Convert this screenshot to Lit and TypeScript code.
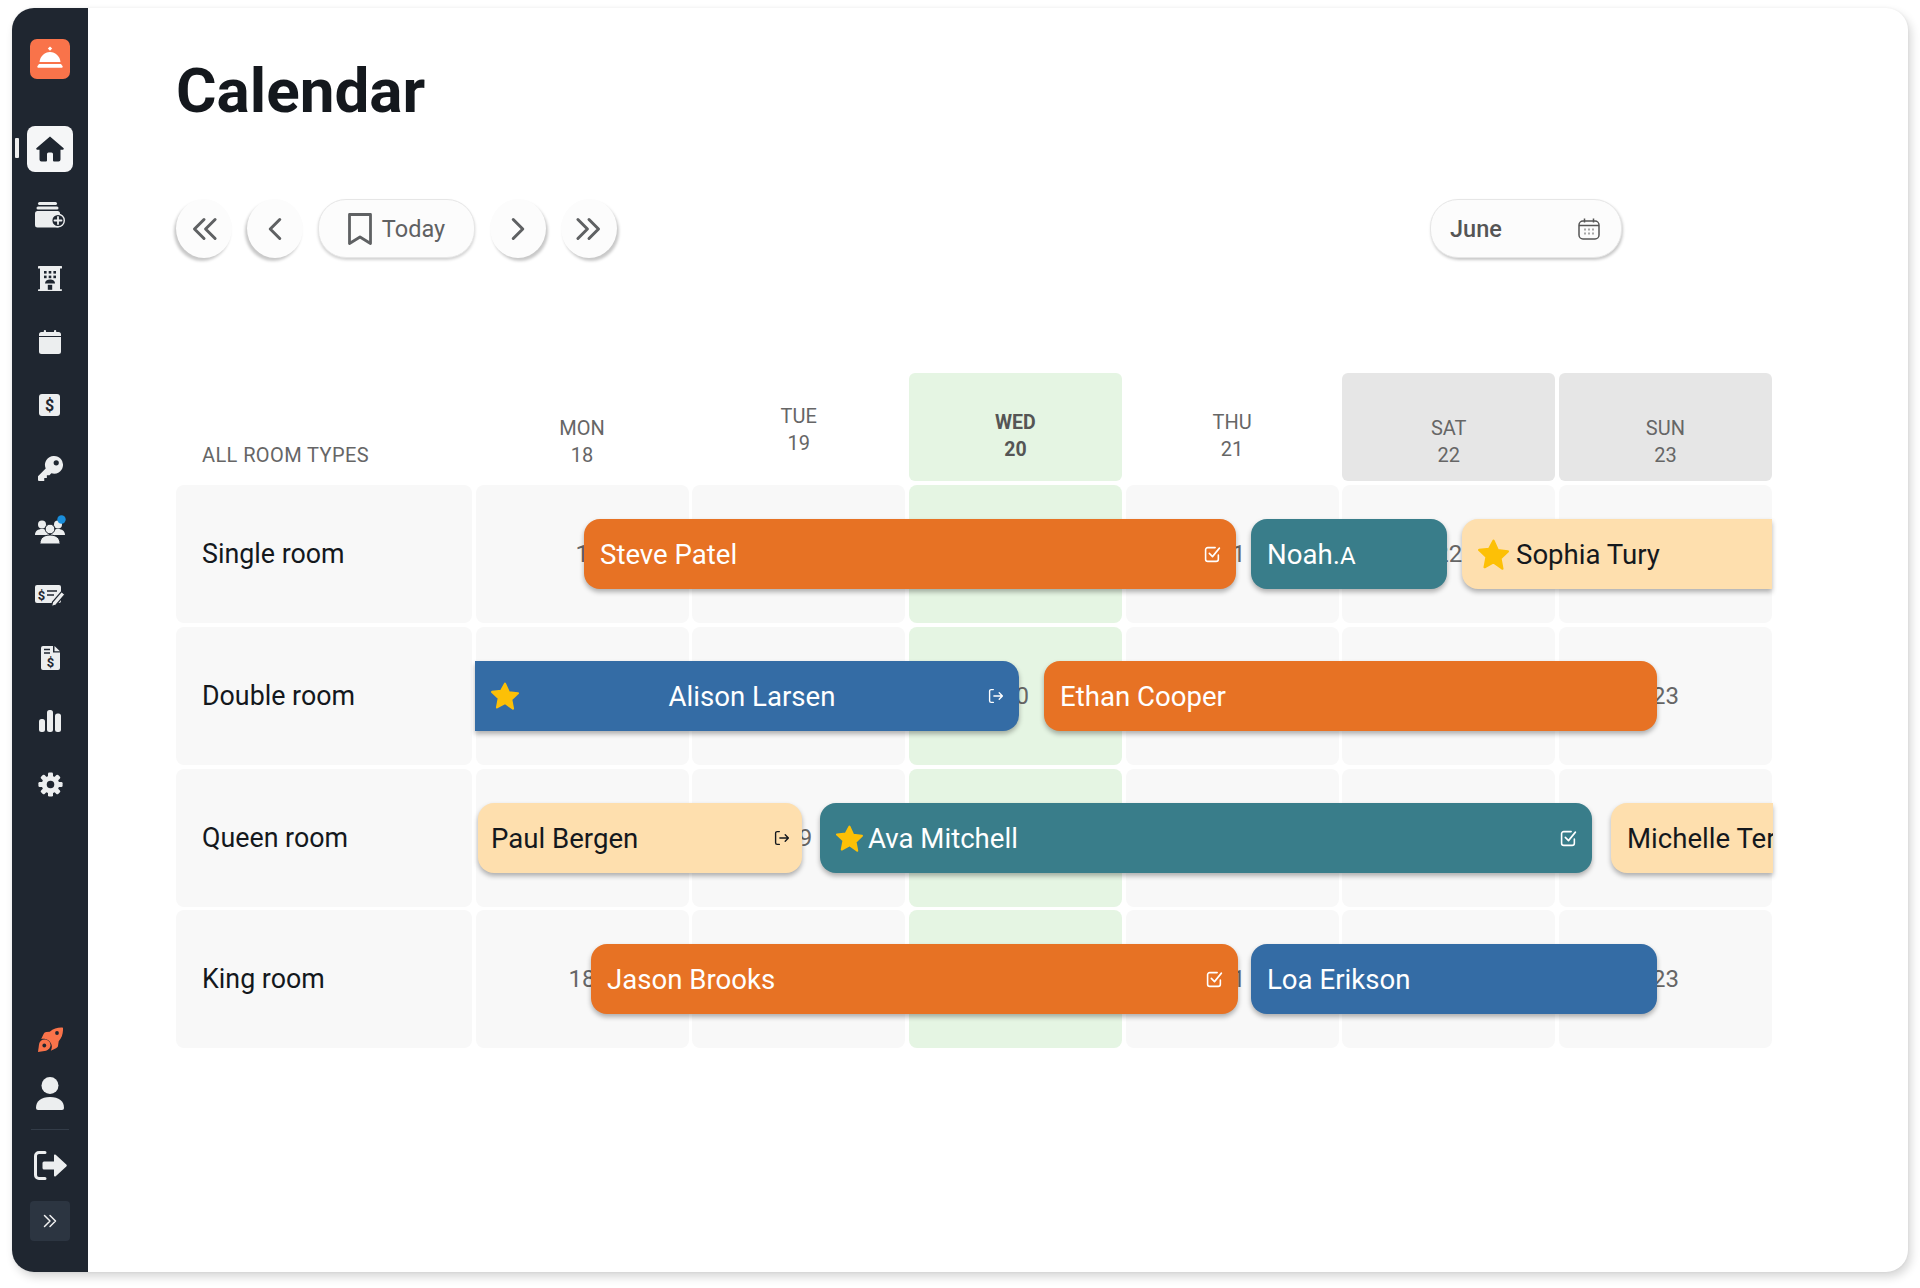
import { LitElement, html, css, svg } from "lit";
import { customElement } from "lit/decorators.js";

const INK = "#1f2630";
const LIGHT = "#eceeef";

const gear = svg`<svg viewBox="0 0 24 24" width="25" height="25">
  ${[0, 45, 90, 135, 180, 225, 270, 315].map(
    (a) => svg`<rect x="9.6" y="0.4" width="4.8" height="6" rx="1.2" fill="${LIGHT}" transform="rotate(${a} 12 12)"/>`
  )}
  <circle cx="12" cy="12" r="8.4" fill="${LIGHT}"/><circle cx="12" cy="12" r="3.6" fill="${INK}"/></svg>`;

const icons = [
  svg`<svg viewBox="0 0 30 26" width="30" height="26">
    <rect x="3" y="0" width="19" height="3" rx="1.5" fill="${LIGHT}"/>
    <rect x="1.5" y="4.5" width="22" height="3" rx="1.5" fill="${LIGHT}"/>
    <rect x="0" y="9" width="25" height="16.5" rx="2.5" fill="${LIGHT}"/>
    <circle cx="23" cy="18.5" r="6.3" fill="${INK}" stroke="${LIGHT}" stroke-width="1.4"/>
    <path d="M23 15v7M19.5 18.5h7" stroke="${LIGHT}" stroke-width="1.8" stroke-linecap="round"/></svg>`,
  svg`<svg viewBox="0 0 24 25" width="24" height="25">
    <path d="M0 .8a.8.8 0 0 1 .8-.8h22.4a.8.8 0 0 1 0 2.4H.8A.8.8 0 0 1 0 .8z M0 24a.8.8 0 0 1 .8-.8h22.4a.8.8 0 0 1 0 1.8H.8A.8.8 0 0 1 0 24z M2 2h20v22H2z" fill="${LIGHT}"/>
    <g fill="${INK}"><rect x="6" y="5" width="2.6" height="2.6"/><rect x="10.7" y="5" width="2.6" height="2.6"/><rect x="15.4" y="5" width="2.6" height="2.6"/><rect x="6" y="9.6" width="2.6" height="2.6"/><rect x="10.7" y="9.6" width="2.6" height="2.6"/><rect x="15.4" y="9.6" width="2.6" height="2.6"/>
    <path d="M7 17.6c0-2.8 2.2-4 5-4s5 1.200 5 4z"/><rect x="9.800" y="18.800" width="4.400" height="5"/></g></svg>`,
  svg`<svg viewBox="0 0 22 24" width="22" height="24">
    <path d="M2.500 2h17A2.500 2.500 0 0 1 22 4.500V6H0V4.500A2.500 2.500 0 0 1 2.500 2zM0 7h22v14.500a2.500 2.500 0 0 1-2.500 2.500h-17A2.500 2.500 0 0 1 0 21.500z" fill="${LIGHT}"/>
    <rect x="4.800" y="0" width="2.200" height="4" rx="1" fill="${LIGHT}"/><rect x="15" y="0" width="2.200" height="4" rx="1" fill="${LIGHT}"/></svg>`,
  svg`<svg viewBox="0 0 22 22" width="22" height="22"><rect width="21" height="22" rx="3" fill="${LIGHT}"/>
    <text x="10.500" y="17" text-anchor="middle" font-family="Roboto" font-weight="700" font-size="16" fill="${INK}">$</text></svg>`,
  svg`<svg viewBox="0 0 24 24" width="25" height="25">
    <path fill-rule="evenodd" d="M15.500 0a8.500 8.500 0 1 1-2.700 16.560L11 18.500H8.500V21H6v3H1a1 1 0 0 1-1-1v-3.600L7.400 12A8.500 8.500 0 0 1 15.500 0zm2 4a2.500 2.500 0 1 0 0 5 2.500 2.500 0 0 0 0-5z" fill="${LIGHT}"/></svg>`,
  svg`<svg viewBox="0 0 30 26" width="30" height="26" overflow="visible">
    <circle cx="7" cy="6.500" r="4" fill="${LIGHT}"/><circle cx="23" cy="6.500" r="4" fill="${LIGHT}"/>
    <path d="M0 17c0-4 3-6 7-6s7 2 7 6zM16 17c0-4 3-6 7-6s7 2 7 6z" fill="${LIGHT}"/>
    <circle cx="15" cy="11" r="4.800" fill="${LIGHT}" stroke="${INK}" stroke-width="1"/>
    <path d="M5 25.500c0-5.500 4-8.500 10-8.500s10 3 10 8.500a.5.5 0 0 1-.5.5h-19a.5.5 0 0 1-.5-.5z" fill="${LIGHT}" stroke="${INK}" stroke-width="1"/>
    <circle cx="26.500" cy="1.500" r="4.200" fill="#1a8edb"/></svg>`,
  svg`<svg viewBox="0 0 30 22" width="30" height="22" style="display:block">
    <rect width="26" height="18" rx="2" fill="${LIGHT}"/>
    <text x="6.500" y="14.500" text-anchor="middle" font-family="Roboto" font-weight="700" font-size="13" fill="${INK}">$</text>
    <path d="M12 6h10M12 10h7" stroke="${INK}" stroke-width="1.500"/>
    <path d="M16.500 21.500l1-4.500L26.500 6.500l3.500 3L21 20z" fill="${LIGHT}" stroke="${INK}" stroke-width="1.200"/></svg>`,
  svg`<svg viewBox="0 0 19 24" width="19" height="24">
    <path d="M2 0h10v6.500h7V22a2 2 0 0 1-2 2H2a2 2 0 0 1-2-2V2a2 2 0 0 1 2-2zM13.500 0L19 5.200h-5.500z" fill="${LIGHT}"/>
    <path d="M3 3.500h6M3 7h6" stroke="${INK}" stroke-width="1.300"/>
    <text x="9.500" y="21" text-anchor="middle" font-family="Roboto" font-weight="700" font-size="13" fill="${INK}">$</text></svg>`,
  svg`<svg viewBox="0 0 22 22" width="22" height="22" fill="${LIGHT}">
    <rect x="0" y="9" width="6" height="13" rx="2.500"/><rect x="8" y="0" width="6" height="22" rx="2.500"/><rect x="16" y="3.500" width="6" height="18.500" rx="2.500"/></svg>`,
  gear,
];

const rocket = svg`<svg viewBox="0 0 25 25" width="25" height="25" fill="#f9734a">
  <path d="M24.400.6c.4 0 .6.300.6.600.2 4.800-1 9.500-4.300 13L20 19c-.2 1-1 1.800-2 2.300l-5.200 2.400c.8-1.500 1.200-3 1-4.700-.5-3.800-3.600-6.700-7.600-7.200-1-.1-2 0-3 .3l2.400-5C6.200 5.700 7.200 5 8.300 4.900l3.500-.2C15.300 1.800 20 .3 24.400.6z"/>
  <circle cx="19" cy="6" r="1.900" fill="${INK}"/>
  <path d="M6.500 12.500c3.600 0 6 2.700 6 5.800 0 2.600-1.800 4.500-4.400 5.400L0 25l1.100-8c.4-2.700 2.600-4.500 5.400-4.500z"/><circle cx="6.300" cy="18.500" r="1.900" fill="${INK}"/></svg>`;
const user = svg`<svg viewBox="0 0 28 33" width="28" height="33" fill="${LIGHT}"><circle cx="14" cy="8.500" r="8.500"/>
  <path d="M0 31c0-7 5-11 14-11s14 4 14 11a2 2 0 0 1-2 2H2a2 2 0 0 1-2-2z"/></svg>`;
const logout = svg`<svg viewBox="0 0 33 29" width="33" height="29">
  <path d="M11 1.500H5a3.500 3.500 0 0 0-3.500 3.500v19A3.500 3.500 0 0 0 5 27.500h6" fill="none" stroke="${LIGHT}" stroke-width="3" stroke-linecap="round"/>
  <path d="M10 10.500h10V4.500a1 1 0 0 1 1.700-.7l10.600 9.700a1.400 1.400 0 0 1 0 2L21.700 25.200a1 1 0 0 1-1.700-.7v-6H10a1.500 1.500 0 0 1-1.500-1.500v-5A1.500 1.500 0 0 1 10 10.500z" fill="${LIGHT}"/></svg>`;
const bell = svg`<svg viewBox="0 0 40 40" width="40" height="40" fill="#fff">
  <path d="M20 7.500l2.200 2-2.200 2.200L17.800 9.500z"/>
  <path d="M9.500 23c.5-5.500 5-10 10.500-10s10 4.500 10.500 10z"/>
  <path d="M9 25h22l1.600 2.200c.3.800-.2 1.600-1 1.600H8.400c-.8 0-1.300-.8-1-1.600z"/></svg>`;
const home = svg`<svg viewBox="0 0 28 26" width="28" height="26">
  <path d="M14 .5L27.400 12a1 1 0 0 1-.6 1.800H24.500V23.500a2 2 0 0 1-2 2H18a1 1 0 0 1-1-1V18a1.500 1.500 0 0 0-1.500-1.500h-3A1.500 1.500 0 0 0 11 18v6.500a1 1 0 0 1-1 1H5.500a2 2 0 0 1-2-2V13.800H1.200a1 1 0 0 1-.6-1.800z" fill="${INK}"/></svg>`;

const chev = (d: string, w = 1.9, size = 38) =>
  svg`<svg viewBox="0 0 24 24" width="${size}" height="${size}" fill="none" stroke="currentColor" stroke-width="${w}" stroke-linecap="round" stroke-linejoin="round"><path d="${d}"/></svg>`;

const star = (s: number) =>
  svg`<svg viewBox="1.500 1.500 21 20.500" width="${s}" height="${s}"><path d="M12 2.500l2.900 6.400 6.800.8-5 4.700 1.300 6.900L12 17l-6 3.300 1.300-6.900-5-4.700 6.800-.8z" fill="#fdc006" stroke="#fdc006" stroke-width="1.600" stroke-linejoin="round"/></svg>`;
const checkIco = svg`<svg viewBox="0 0 16 16" width="17" height="17" fill="none" stroke="currentColor" stroke-width="1.500" stroke-linecap="round" stroke-linejoin="round"><path d="M13.500 8.500v4a2 2 0 0 1-2 2h-8a2 2 0 0 1-2-2v-9a2 2 0 0 1 2-2h7"/><path d="M5 7l3 3 6.500-8"/></svg>`;
const exitIco = svg`<svg viewBox="0 0 15 15" width="16" height="16" fill="none" stroke="currentColor" stroke-width="1.300" stroke-linecap="round" stroke-linejoin="round"><path d="M5 1.500H3a1.500 1.500 0 0 0-1.500 1.500v9A1.500 1.500 0 0 0 3 13.500h2"/><path d="M5.500 7.500h8M10.500 4.500l3 3-3 3"/></svg>`;

interface Bar {
  name: string; small?: string; x: number; w: number; c: string; star?: number; gap?: number; end?: "check" | "exit";
  flatL?: boolean; flatR?: boolean; center?: boolean; pad?: string;
}
const rooms: { name: string; bars: Bar[]; monShift?: number }[] = [
  { name: "Single room", monShift: 14, bars: [
    { name: "Steve Patel", x: 584, w: 652, c: "orange", end: "check" },
    { name: "Noah.", small: "A", x: 1251, w: 196, c: "teal" },
    { name: "Sophia Tury", x: 1462, w: 310, c: "cream", star: 31, gap: 7, flatR: true },
  ] },
  { name: "Double room", bars: [
    { name: "Alison Larsen", x: 475, w: 544, c: "blue", star: 28, gap: 7, end: "exit", flatL: true, center: true },
    { name: "Ethan Cooper", x: 1044, w: 613, c: "orange" },
  ] },
  { name: "Queen room", bars: [
    { name: "Paul Bergen", x: 478, w: 324, c: "cream", end: "exit", pad: "0 12px 0 13px" },
    { name: "Ava Mitchell", x: 820, w: 772, c: "teal", star: 27, gap: 5, end: "check" },
    { name: "Michelle Terry", x: 1611, w: 162, c: "cream", flatR: true },
  ] },
  { name: "King room", bars: [
    { name: "Jason Brooks", x: 591, w: 647, c: "orange", end: "check" },
    { name: "Loa Erikson", x: 1251, w: 406, c: "blue" },
  ] },
];
const days = [
  { d: "MON", n: "18", pb: 12.5, k: "" },
  { d: "TUE", n: "19", pb: 24, k: "" },
  { d: "WED", n: "20", pb: 18, k: "cur" },
  { d: "THU", n: "21", pb: 18, k: "" },
  { d: "SAT", n: "22", pb: 12.5, k: "weekend" },
  { d: "SUN", n: "23", pb: 12.5, k: "weekend" },
];

@customElement("app-root")
export class AppRoot extends LitElement {
  static styles = css`
    :host { display: block; height: 1288px; box-sizing: border-box; padding: 8px 12px 16px; background: #fff; font-family: Roboto, sans-serif; overflow: hidden; }
    .frame { display: flex; height: 100%; border-radius: 22px; background: #fff; box-shadow: 3px 5px 10px rgba(0,0,0,.16), 0 0 3px rgba(0,0,0,.06); overflow: hidden; }
    .side { width: 76px; flex: none; background: #1f2630; display: flex; flex-direction: column; align-items: center; padding: 31px 0; box-sizing: border-box; position: relative; }
    .logo { width: 40px; height: 40px; border-radius: 7px; background: #f9734a; flex: none; margin-bottom: 38px; }
    .item { height: 63.2px; width: 100%; display: flex; align-items: center; justify-content: center; flex: none; }
    .item.first { margin-bottom: 3.6px; position: relative; }
    .item:nth-of-type(9) { padding-top: 3px; box-sizing: border-box; }
    .tile { width: 46px; height: 46px; border-radius: 8px; background: #f5f6f7; display: flex; align-items: center; justify-content: center; }
    .mark { position: absolute; left: 3px; top: 21px; width: 3.5px; height: 20px; background: #eee; border-radius: 1px; }
    .bottom { margin-top: auto; display: flex; flex-direction: column; align-items: center; width: 100%; }
    .rocket { height: 25px; margin-bottom: 25px; margin-top: -1px; }
    .user { height: 33px; margin-bottom: 19px; }
    .divider { width: 38px; height: 1px; background: #333c48; margin-bottom: 21px; }
    .logout { height: 29px; margin-bottom: 21px; }
    .expand { width: 40px; height: 40px; border-radius: 4px; background: #2c3541; color: #f2f2f2; display: flex; align-items: center; justify-content: center; }
    .main { flex: 1; padding: 0 0 0 88px; min-width: 0; }
    h1 { margin: 0; font-size: 62px; line-height: 72px; font-weight: 700; color: #14181d; padding-top: 47px; height: 145px; box-sizing: border-box; }
    .toolbar { display: flex; align-items: center; width: 1446px; justify-content: space-between; height: 59px; margin-top: 46px; margin-bottom: 115px; }
    .nav { display: flex; gap: 15px; }
    .btn { height: 59px; background: #fcfcfc; color: #5f6163; display: flex; align-items: center; justify-content: center; box-sizing: border-box; }
    .round { width: 56px; border-radius: 50%; }
    .sl { box-shadow: -2px 3px 3px rgba(0,0,0,.22); }
    .sr { box-shadow: 2px 3px 3px rgba(0,0,0,.22); }
    .todaybtn { width: 157px; border-radius: 28px; border: 1px solid #e6e6e6; box-shadow: 0 2px 3px rgba(0,0,0,.18); font-size: 23.5px; gap: 10px; }
    .month { width: 192px; border-radius: 28px; border: 1px solid #e6e6e6; box-shadow: 1px 2px 3px rgba(0,0,0,.22); padding: 0 21px 0 19px; justify-content: space-between; font-size: 23.5px; font-weight: 500; color: #555; }
    .grid { width: 1596px; display: flex; flex-direction: column; gap: 4px; }
    .cols { display: grid; grid-template-columns: 296px repeat(6, 1fr); column-gap: 3.5px; }
    .head { height: 108px; }
    .all { align-self: end; padding: 0 0 12.5px 26px; font-size: 20px; line-height: 27px; letter-spacing: .4px; color: #666; }
    .hd { display: flex; flex-direction: column; justify-content: flex-end; align-items: center; border-radius: 6px; font-size: 20px; line-height: 27px; color: #666; box-sizing: border-box; }
    .hd.cur { background: #e5f5e3; font-weight: 700; color: #555; font-size: 19.5px; }
    .hd.weekend { background: #e6e6e6; }
    .row { position: relative; height: 138px; }
    .row:last-child { margin-top: -1px; }
    .cell { background: #f8f8f8; border-radius: 8px; display: flex; align-items: center; justify-content: center; font-size: 24px; color: #666; }
    .cell.cur { background: #e5f5e3; }
    .cell.name { justify-content: flex-start; padding-left: 26px; font-size: 26.8px; color: #14181d; }
    .bar { position: absolute; top: 34px; height: 70px; border-radius: 16px; box-shadow: 0 3px 5px rgba(0,0,0,.3); display: flex; align-items: center; padding: 0 15px 0 16px; box-sizing: border-box; font-size: 27.6px; white-space: nowrap; overflow: hidden; }
    .bar.orange { background: #e77224; color: #fff; }
    .bar.teal { background: #397d8a; color: #fff; }
    .bar.blue { background: #346ca5; color: #fff; }
    .bar.cream { background: #fedfae; color: #14181d; }
    .bar.flatL { border-top-left-radius: 0; border-bottom-left-radius: 0; }
    .bar.flatR { border-top-right-radius: 0; border-bottom-right-radius: 0; }
    .label { flex: 1; }
    .label.center { text-align: center; padding-right: 10px; }
    .small { font-size: 24px; }
    .star { display: flex; flex: none; }
    .end { display: flex; flex: none; }
  `;

  private renderBar(b: Bar) {
    const cls = `bar ${b.c}${b.flatL ? " flatL" : ""}${b.flatR ? " flatR" : ""}`;
    return html`<div class=${cls} style="left:${b.x - 176}px;width:${b.w}px;${b.pad ? `padding:${b.pad}` : ""}">
      ${b.star ? html`<span class="star" style="margin-right:${b.gap}px">${star(b.star)}</span>` : ""}
      <span class="label ${b.center ? "center" : ""}">${b.name}${b.small ? html`<span class="small">${b.small}</span>` : ""}</span>
      ${b.end ? html`<span class="end">${b.end === "check" ? checkIco : exitIco}</span>` : ""}
    </div>`;
  }

  render() {
    return html`<div class="frame">
      <aside class="side">
        <div class="logo">${bell}</div>
        <div class="item first"><span class="mark"></span><div class="tile">${home}</div></div>
        ${icons.map((i) => html`<div class="item">${i}</div>`)}
        <div class="bottom">
          <div class="rocket">${rocket}</div>
          <div class="user">${user}</div>
          <div class="divider"></div>
          <div class="logout">${logout}</div>
          <div class="expand">${chev("M6 6l6 6-6 6M12 6l6 6-6 6", 1.6, 22)}</div>
        </div>
      </aside>
      <main class="main">
        <h1>Calendar</h1>
        <div class="toolbar">
          <div class="nav">
            <div class="btn round sl">${chev("M12 6l-6 6 6 6M19 6l-6 6 6 6")}</div>
            <div class="btn round sl">${chev("M15 6l-6 6 6 6")}</div>
            <div class="btn todaybtn">${svg`<svg viewBox="0 0 24 32" width="24" height="32" fill="none" stroke="currentColor" stroke-width="2.8" stroke-linejoin="round"><path d="M1.500 1.500h21v29L12 24 1.500 30.500z"/></svg>`}<span>Today</span></div>
            <div class="btn round sr">${chev("M9 6l6 6-6 6")}</div>
            <div class="btn round sr">${chev("M5 6l6 6-6 6M12 6l6 6-6 6")}</div>
          </div>
          <div class="btn month"><span>June</span>${svg`<svg viewBox="0 0 22 22" width="22" height="22" fill="none" stroke="currentColor" stroke-width="1.500"><rect x="1" y="3" width="20" height="18" rx="4"/><path d="M1 7.500h20M6.500 0.500v4M15.500 .5v4"/><path d="M6.500 11.500h1M10.500 11.500h1M14.500 11.500h1M6.500 15.500h1M10.500 15.500h1M14.500 15.500h1" stroke-width="2"/></svg>`}</div>
        </div>
        <div class="grid">
          <div class="cols head">
            <div class="all">ALL ROOM TYPES</div>
            ${days.map((d) => html`<div class="hd ${d.k}" style="padding-bottom:${d.pb}px"><span>${d.d}</span><span>${d.n}</span></div>`)}
          </div>
          ${rooms.map((r) => html`<div class="cols row">
            <div class="cell name">${r.name}</div>
            ${days.map((d, i) => html`<div class="cell ${d.k === "cur" ? "cur" : ""}" style=${i === 0 && r.monShift ? `padding-left:${r.monShift}px` : ""}>${d.n}</div>`)}
            ${r.bars.map((b) => this.renderBar(b))}
          </div>`)}
        </div>
      </main>
    </div>`;
  }
}
